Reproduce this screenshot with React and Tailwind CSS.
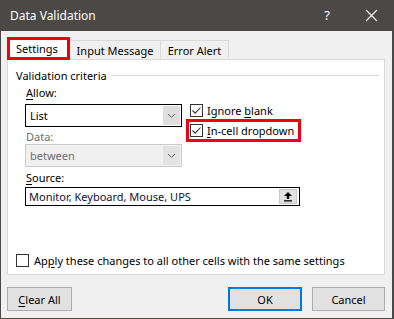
const Check = () => (
  <div className="w-[13px] h-[13px] border border-[#333333] bg-white flex items-center justify-center shrink-0">
    <svg width="11" height="11" viewBox="0 0 11 11">
      <path d="M1.5 5.5 L4.2 8.2 L9.5 2.5" fill="none" stroke="#333333" strokeWidth="1.1" />
    </svg>
  </div>
)

const Chevron = ({ disabled }) => (
  <div className={`w-[17px] self-stretch my-px mr-px flex items-center justify-center ${disabled ? 'bg-[#e3e3e3]' : 'bg-[#dedede]'}`}>
    <svg width="9" height="6" viewBox="0 0 9 6">
      <path d="M1 1 L4.5 4.5 L8 1" fill="none" stroke="#606060" strokeWidth="1" />
    </svg>
  </div>
)

const U = ({ children }) => <span className="underline underline-offset-2">{children}</span>

export default function App() {
  return (
    <div className="w-[394px] h-[319px] bg-[#f0f0f0] border-l border-b border-r-2 border-[#4b4845] flex flex-col font-['Noto_Sans',sans-serif] text-[11px] text-black leading-none whitespace-nowrap">
      {/* title bar */}
      <div className="h-[31px] shrink-0 bg-[#4b4845] flex items-center pl-[9px] text-white text-[12px]">
        <span className="flex-1">Data Validation</span>
        <span className="w-[12px] text-[13px] mr-[32px] text-center">?</span>
        <svg width="13" height="13" viewBox="0 0 13 13" className="mr-[14px]">
          <path d="M1 1 L12 12 M12 1 L1 12" stroke="white" strokeWidth="1.1" />
        </svg>
      </div>

      <div className="ml-[6px] w-[378px] flex flex-col">
        {/* tabs */}
        <div className="mt-[6px] h-[23px] flex items-end relative z-10">
          <div className="w-[63px] h-[23px] border-[3px] border-[#ee0010] bg-white flex items-center pl-[6px]">Settings</div>
          <div className="w-[91px] h-[20px] border-t border-r border-[#d9d9d9] flex items-center justify-center">Input Message</div>
          <div className="w-[68px] h-[20px] border-t border-r border-[#d9d9d9] flex items-center justify-center">Error Alert</div>
        </div>

        {/* panel */}
        <div className="h-[216px] -mt-px border border-[#d9d9d9] bg-white flex flex-col">
          <div className="mt-[7px] h-[16px] flex items-center pl-[8px]">
            <span>Validation criteria</span>
            <div className="flex-1 h-px bg-[#dcdcdc] ml-[4px] mr-[5px]" />
          </div>

          <div className="pl-[17px] flex">
            <div className="w-[157px] flex flex-col">
              <div className="mt-[1px] h-[16px] flex items-center pl-px"><span><U>A</U>llow:</span></div>
              <div className="mt-[4px] h-[23px] border border-black flex items-center">
                <span className="flex-1 pl-[4px]">List</span>
                <Chevron />
              </div>
              <div className="mt-[1px] h-[16px] flex items-center pl-px text-[#6d6d6d]">Data:</div>
              <div className="h-[23px] border border-[#cccccc] bg-[#f0f0f0] flex items-center text-[#6d6d6d]">
                <span className="flex-1 pl-[4px]">between</span>
                <Chevron disabled />
              </div>
            </div>

            <div className="ml-[4px] flex flex-col">
              <div className="mt-[21px] h-[13px] flex items-center pl-[4px] gap-[4px]">
                <Check />
                <span>Ignore <U>b</U>lank</span>
              </div>
              <div className="mt-[2px] w-[115px] h-[23px] border-[3px] border-[#ee0010] flex items-center pl-px gap-[4px]">
                <Check />
                <span><U>I</U>n-cell dropdown</span>
              </div>
            </div>
          </div>

          <div className="pl-[17px] flex flex-col">
            <div className="mt-[2px] h-[16px] flex items-center pl-px"><span><U>S</U>ource:</span></div>
            <div className="mt-[2px] w-[275px] h-[19px] border border-black flex items-center">
              <span className="flex-1 pl-[3px] text-[#111133]">Monitor, Keyboard, Mouse, UPS</span>
              <div className="w-[18px] h-[15px] mr-[2px] bg-[#e1e1e1] border border-[#c8c8c8] flex items-center justify-center">
                <svg width="10" height="11" viewBox="0 0 10 11">
                  <path d="M5 1 L9 5 L6.2 5 L6.2 8 L3.8 8 L3.8 5 L1 5 Z" fill="black" />
                  <rect x="1" y="9.2" width="8" height="1.3" fill="black" />
                </svg>
              </div>
            </div>
          </div>

          <div className="mt-[48px] h-[13px] flex items-center pl-[8px] gap-[5px]">
            <div className="w-[13px] h-[13px] border border-[#333333] bg-white shrink-0" />
            <span>Ap<U>p</U>ly these changes to all other cells with the same settings</span>
          </div>
        </div>

        {/* buttons */}
        <div className="mt-[12px] flex justify-between">
          <div className="w-[65px] h-[24px] bg-[#e1e1e1] border border-[#adadad] flex items-center justify-center"><span><U>C</U>lear All</span></div>
          <div className="flex gap-[10px]">
            <div className="w-[74px] h-[24px] bg-[#e1e1e1] border-2 border-[#0078d7] flex items-center justify-center">OK</div>
            <div className="w-[73px] h-[24px] bg-[#e1e1e1] border border-[#adadad] flex items-center justify-center">Cancel</div>
          </div>
        </div>
      </div>
    </div>
  )
}
